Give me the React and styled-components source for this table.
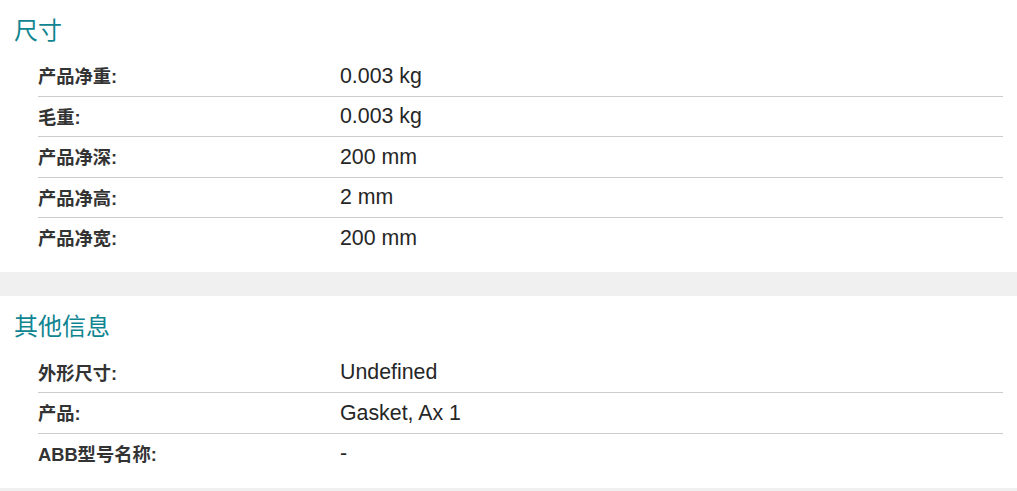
import React from "react";
import styled, { createGlobalStyle } from "styled-components";

const Global = createGlobalStyle`
  html, body { margin: 0; padding: 0; background: #f0f0f0; }
  body { font-family: "Liberation Sans", Arial, "Noto Sans CJK SC", sans-serif; }
`;

const Page = styled.div`
  width: 1017px;
  display: flex;
  flex-direction: column;
  gap: 24px;
  background: #f0f0f0;
`;

const Section = styled.section`
  background: #ffffff;
  padding: 12px 14px 14.7px 14px;
`;

const Title = styled.h2`
  margin: 0 0 10.2px 0;
  font-family: "Noto Sans CJK SC", sans-serif;
  font-weight: 400;
  font-size: 24px;
  line-height: 34px;
  color: #0f8591;
`;

const Rows = styled.div`
  margin-left: 24px;
  display: flex;
  flex-direction: column;
`;

const Row = styled.div`
  display: grid;
  grid-template-columns: 302px 1fr;
  align-items: center;
  height: 39.5px;
  border-bottom: 1px solid #cccccc;
  &:last-child { border-bottom: none; }
`;

const Label = styled.div`
  font-family: "Liberation Sans", Arial, "Noto Sans CJK SC", sans-serif;
  font-weight: 700;
  font-size: 18.3px;
  color: #333333;
  margin-top: -1px;
`;

const Value = styled.div`
  font-family: "Liberation Sans", Arial, "Noto Sans CJK SC", sans-serif;
  font-size: 21.33px;
  color: #262626;
  margin-top: 1px;
`;

const sections = [
  {
    title: "尺寸",
    rows: [
      ["产品净重:", "0.003 kg"],
      ["毛重:", "0.003 kg"],
      ["产品净深:", "200 mm"],
      ["产品净高:", "2 mm"],
      ["产品净宽:", "200 mm"],
    ],
  },
  {
    title: "其他信息",
    rows: [
      ["外形尺寸:", "Undefined"],
      ["产品:", "Gasket, Ax 1"],
      ["ABB型号名称:", "-"],
    ],
  },
];

export default function App() {
  return (
    <>
      <Global />
      <Page>
        {sections.map((s) => (
          <Section key={s.title}>
            <Title>{s.title}</Title>
            <Rows>
              {s.rows.map(([l, v]) => (
                <Row key={l}>
                  <Label>{l}</Label>
                  <Value>{v}</Value>
                </Row>
              ))}
            </Rows>
          </Section>
        ))}
      </Page>
    </>
  );
}
